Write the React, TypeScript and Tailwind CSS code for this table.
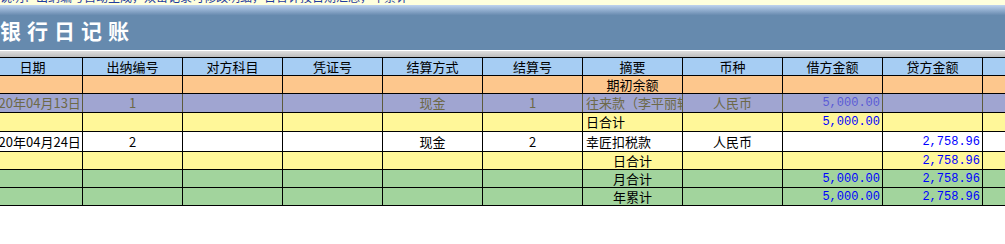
import React from 'react';

type Align = 'c' | 'l' | 'r';
interface CellDef {
  text?: string;
  align?: Align;
  money?: boolean;
}
interface RowDef {
  bg: string;
  h: string;
  dim?: boolean;
  cells: CellDef[];
}

const headers = ['日期', '出纳编号', '对方科目', '凭证号', '结算方式', '结算号', '摘要', '币种', '借方金额', '贷方金额', ''];

const blank = (n: number): CellDef[] => Array.from({ length: n }, () => ({}));

const rows: RowDef[] = [
  {
    bg: 'bg-[#fdc78d]',
    h: 'h-[18px]',
    cells: [...blank(6), { text: '期初余额' }, ...blank(4)],
  },
  {
    bg: 'bg-[#a0a5d1]',
    h: 'h-[19px]',
    dim: true,
    cells: [
      { text: '2020年04月13日' },
      { text: '1' },
      {},
      {},
      { text: '现金' },
      { text: '1' },
      { text: '往来款（李平丽转账）', align: 'l' },
      { text: '人民币' },
      { text: '5,000.00', money: true },
      {},
      {},
    ],
  },
  {
    bg: 'bg-[#fff799]',
    h: 'h-[19px]',
    cells: [...blank(6), { text: '日合计', align: 'l' }, {}, { text: '5,000.00', money: true }, {}, {}],
  },
  {
    bg: 'bg-white',
    h: 'h-[20px]',
    cells: [
      { text: '2020年04月24日' },
      { text: '2' },
      {},
      {},
      { text: '现金' },
      { text: '2' },
      { text: '幸匠扣税款', align: 'l' },
      { text: '人民币' },
      {},
      { text: '2,758.96', money: true },
      {},
    ],
  },
  {
    bg: 'bg-[#fff799]',
    h: 'h-[18px]',
    cells: [...blank(6), { text: '日合计' }, {}, {}, { text: '2,758.96', money: true }, {}],
  },
  {
    bg: 'bg-[#a2d49d]',
    h: 'h-[18px]',
    cells: [...blank(6), { text: '月合计' }, {}, { text: '5,000.00', money: true }, { text: '2,758.96', money: true }, {}],
  },
  {
    bg: 'bg-[#a2d49d]',
    h: 'h-[18px]',
    cells: [...blank(6), { text: '年累计' }, {}, { text: '5,000.00', money: true }, { text: '2,758.96', money: true }, {}],
  },
];

const Cell: React.FC<{ cell: CellDef; dim?: boolean }> = ({ cell, dim }) => {
  const align = cell.money ? 'justify-end pr-[2px]' : cell.align === 'l' ? 'justify-start pl-[3px]' : 'justify-center';
  const color = cell.money
    ? dim
      ? 'text-[#5b5bd6]'
      : 'text-[#0000ff]'
    : dim
      ? 'text-[#6d6948]'
      : 'text-black';
  const font = cell.money ? 'font-["Liberation_Mono",monospace] text-[12px]' : 'text-[13px]';
  return (
    <div
      className={`w-[100px] shrink-0 h-full flex items-center overflow-hidden whitespace-nowrap border-r ${
        dim ? 'border-[#5c5a3c]' : 'border-black'
      } ${align} ${color} ${font}`}
    >
      {cell.text}
    </div>
  );
};

export default function App() {
  return (
    <div className="w-[1005px] h-[244px] bg-white overflow-hidden font-['Noto_Sans_CJK_SC',sans-serif]">
      {/* top note strip, mostly scrolled away */}
      <div className="h-[5px] bg-[#ffffdd] overflow-hidden">
        <div className="mt-[-11px] text-[12px] leading-[16px] text-[#1f3c9c] whitespace-nowrap">
          说明：出纳编号自动生成，双击记录可修改明细，日合计按日期汇总，年累计
        </div>
      </div>

      {/* title band */}
      <div className="h-[10px] bg-gradient-to-b from-[#c0d4ee] via-[#93afd0] to-[#6a8cb0]" />
      <div className="h-[35px] bg-[#668aae] pt-[4px]">
        <div className="text-white font-bold text-[21px] leading-[22px] tracking-[6px] whitespace-nowrap">银行日记账</div>
      </div>
      <div className="h-[1px] bg-white" />
      <div className="h-[6px] bg-gradient-to-b from-[#dedede] to-[#bdbdbd]" />

      {/* ledger table */}
      <div className="ml-[-17px] border-t border-black">
        <div className="flex h-[18px] bg-[#a6cdf3] border-b border-black">
          {headers.map((h, i) => (
            <div
              key={i}
              className="w-[100px] shrink-0 h-full flex items-center justify-center border-r border-black text-[13px] text-black whitespace-nowrap"
            >
              {h}
            </div>
          ))}
        </div>
        {rows.map((r, i) => (
          <div key={i} className={`flex ${r.h} ${r.bg} border-b border-black`}>
            {r.cells.map((c, j) => (
              <Cell key={j} cell={c} dim={r.dim} />
            ))}
          </div>
        ))}
      </div>
    </div>
  );
}
